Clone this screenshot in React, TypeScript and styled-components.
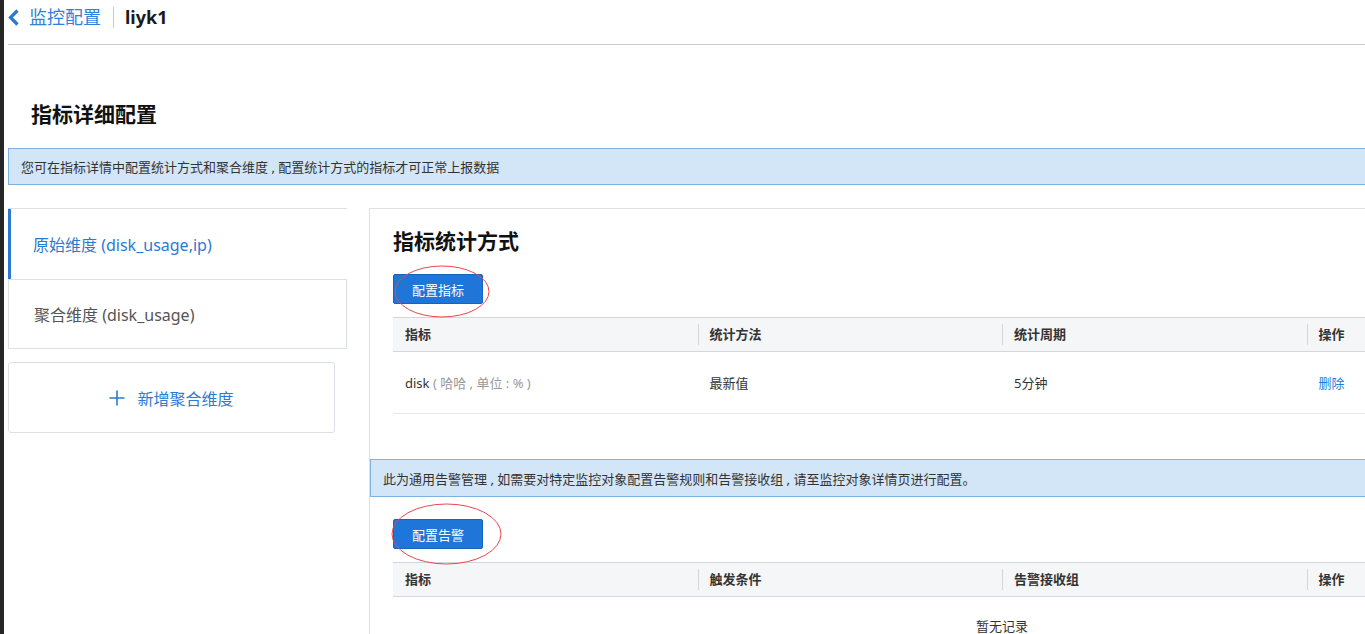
import styled, { createGlobalStyle } from 'styled-components'

const GlobalStyle = createGlobalStyle`
  html, body {
    margin: 0;
    padding: 0;
    overflow: hidden;
    background: #fff;
  }
  body {
    font-family: "Noto Sans", "Noto Sans CJK SC", sans-serif;
    color: #333;
  }
`

const metricRows = [
  { name: 'disk', note: ' ( 哈哈 , 单位 : % )', method: '最新值', period: '5分钟' }
]

const Chevron = () => (
  <svg width="11" height="17" viewBox="0 0 11 17">
    <polyline
      points="9.5,1.5 2.5,8.5 9.5,15.5"
      fill="none"
      stroke="#2a7ad4"
      strokeWidth="3.2"
      strokeLinejoin="miter"
    />
  </svg>
)

const Plus = () => (
  <svg width="16" height="16" viewBox="0 0 16 16">
    <path d="M8 0.5V15.5M0.5 8H15.5" stroke="#2a7ad4" strokeWidth="1.6" fill="none" />
  </svg>
)

const Mark = ({ w, h }: { w: number; h: number }) => (
  <svg width={w} height={h} viewBox={`0 0 ${w} ${h}`}>
    <ellipse cx={w / 2} cy={h / 2} rx={w / 2 - 1} ry={h / 2 - 1} fill="none" stroke="#e8474c" strokeWidth="1" />
  </svg>
)

const App = () => {
  return (
    <>
      <GlobalStyle />
      <Shell>
        <Strip />
        <Main>
          <Header>
            <BackLink>
              <Chevron />
              <span>监控配置</span>
            </BackLink>
            <Divider />
            <Name>liyk1</Name>
          </Header>

          <PageTitle>指标详细配置</PageTitle>
          <Notice>您可在指标详情中配置统计方式和聚合维度 , 配置统计方式的指标才可正常上报数据</Notice>

          <Body>
            <Side>
              <NavList>
                <NavItem active>原始维度 (disk_usage,ip)</NavItem>
                <NavItem>聚合维度 (disk_usage)</NavItem>
              </NavList>
              <AddCard>
                <Plus />
                <span>新增聚合维度</span>
              </AddCard>
            </Side>

            <Panel>
              <Section>
                <SectionTitle>指标统计方式</SectionTitle>
                <ButtonWrap>
                  <PrimaryButton>配置指标</PrimaryButton>
                  <MarkBox style={{ left: 1, top: -9 }}>
                    <Mark w={96} h={53} />
                  </MarkBox>
                </ButtonWrap>
                <Table>
                  <HeadRow>
                    <HeadCell>指标</HeadCell>
                    <HeadCell divided>统计方法</HeadCell>
                    <HeadCell divided>统计周期</HeadCell>
                    <HeadCell divided>操作</HeadCell>
                  </HeadRow>
                  {metricRows.map(row => (
                    <BodyRow key={row.name}>
                      <Cell>
                        {row.name}
                        <Muted>{row.note}</Muted>
                      </Cell>
                      <Cell>{row.method}</Cell>
                      <Cell>{row.period}</Cell>
                      <Cell>
                        <Action>删除</Action>
                      </Cell>
                    </BodyRow>
                  ))}
                </Table>
              </Section>

              <PanelNotice>此为通用告警管理 , 如需要对特定监控对象配置告警规则和告警接收组 , 请至监控对象详情页进行配置。</PanelNotice>

              <Section alarm>
                <ButtonWrap>
                  <PrimaryButton>配置告警</PrimaryButton>
                  <MarkBox style={{ left: -2, top: -16 }}>
                    <Mark w={111} h={62} />
                  </MarkBox>
                </ButtonWrap>
                <Table>
                  <HeadRow>
                    <HeadCell>指标</HeadCell>
                    <HeadCell divided>触发条件</HeadCell>
                    <HeadCell divided>告警接收组</HeadCell>
                    <HeadCell divided>操作</HeadCell>
                  </HeadRow>
                  <Empty>暂无记录</Empty>
                </Table>
              </Section>
            </Panel>
          </Body>
        </Main>
      </Shell>
    </>
  )
}

export default App

const Shell = styled.div`
  display: flex;
  min-height: 634px;
`

const Strip = styled.div`
  width: 4px;
  flex-shrink: 0;
  background: #262626;
`

const Main = styled.div`
  width: 1627px;
  flex-shrink: 0;
  margin-left: 4px;
`

const Header = styled.div`
  display: flex;
  align-items: center;
  height: 34px;
  padding-bottom: 10px;
  border-bottom: 1px solid #cccccc;
`

const BackLink = styled.a`
  display: flex;
  align-items: center;
  gap: 10px;
  color: #2f82dc;
  font-size: 18px;
  line-height: 24px;
  cursor: pointer;

  svg {
    margin-top: 1px;
  }
`

const Divider = styled.div`
  width: 1px;
  height: 21px;
  background: #c8c8c8;
  margin: 0 11px 0 12px;
`

const Name = styled.div`
  font-size: 18px;
  font-weight: 700;
  color: #1a1a1a;
  line-height: 24px;
`

const PageTitle = styled.h1`
  margin: 54px 0 19px 23px;
  font-size: 21px;
  line-height: 30px;
  font-weight: 700;
  color: #111;
`

const Notice = styled.div`
  height: 35px;
  display: flex;
  align-items: center;
  padding-left: 12px;
  background: #d3e6f7;
  border: 1px solid #7eb2e1;
  border-right: none;
  font-size: 13px;
  color: #333;
`

const Body = styled.div`
  display: flex;
  gap: 22px;
  margin-top: 23px;
`

const Side = styled.div`
  width: 339px;
  flex-shrink: 0;
`

const NavList = styled.div`
  border-top: 1px solid #dde1e6;
`

const NavItem = styled.div<{ active?: boolean }>`
  height: 70px;
  display: flex;
  align-items: center;
  box-sizing: border-box;
  font-size: 16px;
  padding-left: ${props => (props.active ? '22px' : '25px')};
  color: ${props => (props.active ? '#2a7ad4' : '#555')};
  border-left: ${props => (props.active ? '3px solid #2a7ad4' : '1px solid #dde1e6')};
  border-right: ${props => (props.active ? 'none' : '1px solid #dde1e6')};
  border-bottom: ${props => (props.active ? 'none' : '1px solid #dde1e6')};
  border-top: ${props => (props.active ? 'none' : '1px solid #dde1e6')};
`

const AddCard = styled.div`
  width: 327px;
  height: 71px;
  box-sizing: border-box;
  margin-top: 13px;
  border: 1px solid #dcdfe6;
  border-radius: 3px;
  display: flex;
  align-items: center;
  justify-content: center;
  gap: 12px;
  color: #2a7ad4;
  font-size: 16px;
  cursor: pointer;
`

const Panel = styled.div`
  flex: 1;
  border-top: 1px solid #dde1e6;
  border-left: 1px solid #dde1e6;
  min-height: 440px;
`

const Section = styled.div<{ alarm?: boolean }>`
  padding: ${props => (props.alarm ? '22px 0 0 23px' : '17px 0 0 23px')};
`

const SectionTitle = styled.h2`
  margin: 0 0 18px;
  font-size: 21px;
  line-height: 30px;
  font-weight: 700;
  color: #111;
`

const ButtonWrap = styled.div`
  position: relative;
  width: 90px;
  height: 30px;
  margin-bottom: 13px;
`

const PrimaryButton = styled.button`
  width: 90px;
  height: 30px;
  padding: 0;
  border: 1px solid #1763bd;
  border-radius: 2px;
  background: #1f75d8;
  color: #fff;
  font-family: inherit;
  font-size: 13px;
  cursor: pointer;
`

const MarkBox = styled.div`
  position: absolute;
  pointer-events: none;
  line-height: 0;
`

const Table = styled.div`
  width: 1218px;
`

const HeadRow = styled.div`
  display: grid;
  grid-template-columns: repeat(4, 1fr);
  height: 33px;
  align-items: center;
  background: #f5f6f8;
  border-top: 1px solid #d3d6dd;
  border-bottom: 1px solid #d3d6dd;
`

const HeadCell = styled.div<{ divided?: boolean }>`
  font-size: 13px;
  font-weight: 700;
  color: #333;
  padding-left: 11px;
  line-height: 21px;
  border-left: ${props => (props.divided ? '1px solid #d3d6dd' : '1px solid transparent')};
`

const BodyRow = styled.div`
  display: grid;
  grid-template-columns: repeat(4, 1fr);
  height: 61px;
  align-items: center;
  border-bottom: 1px solid #e6e8eb;
`

const Cell = styled.div`
  font-size: 13px;
  color: #333;
  padding-left: 12px;
  white-space: pre;
`

const Muted = styled.span`
  color: #999;
`

const Action = styled.a`
  color: #2a7ad4;
  cursor: pointer;
`

const PanelNotice = styled.div`
  margin-top: 45px;
  height: 36px;
  display: flex;
  align-items: center;
  padding-left: 12px;
  background: #d3e6f7;
  border: 1px solid #7eb2e1;
  border-right: none;
  font-size: 13px;
  color: #333;
`

const Empty = styled.div`
  text-align: center;
  padding-top: 20px;
  font-size: 13px;
  line-height: 18px;
  color: #333;
`
